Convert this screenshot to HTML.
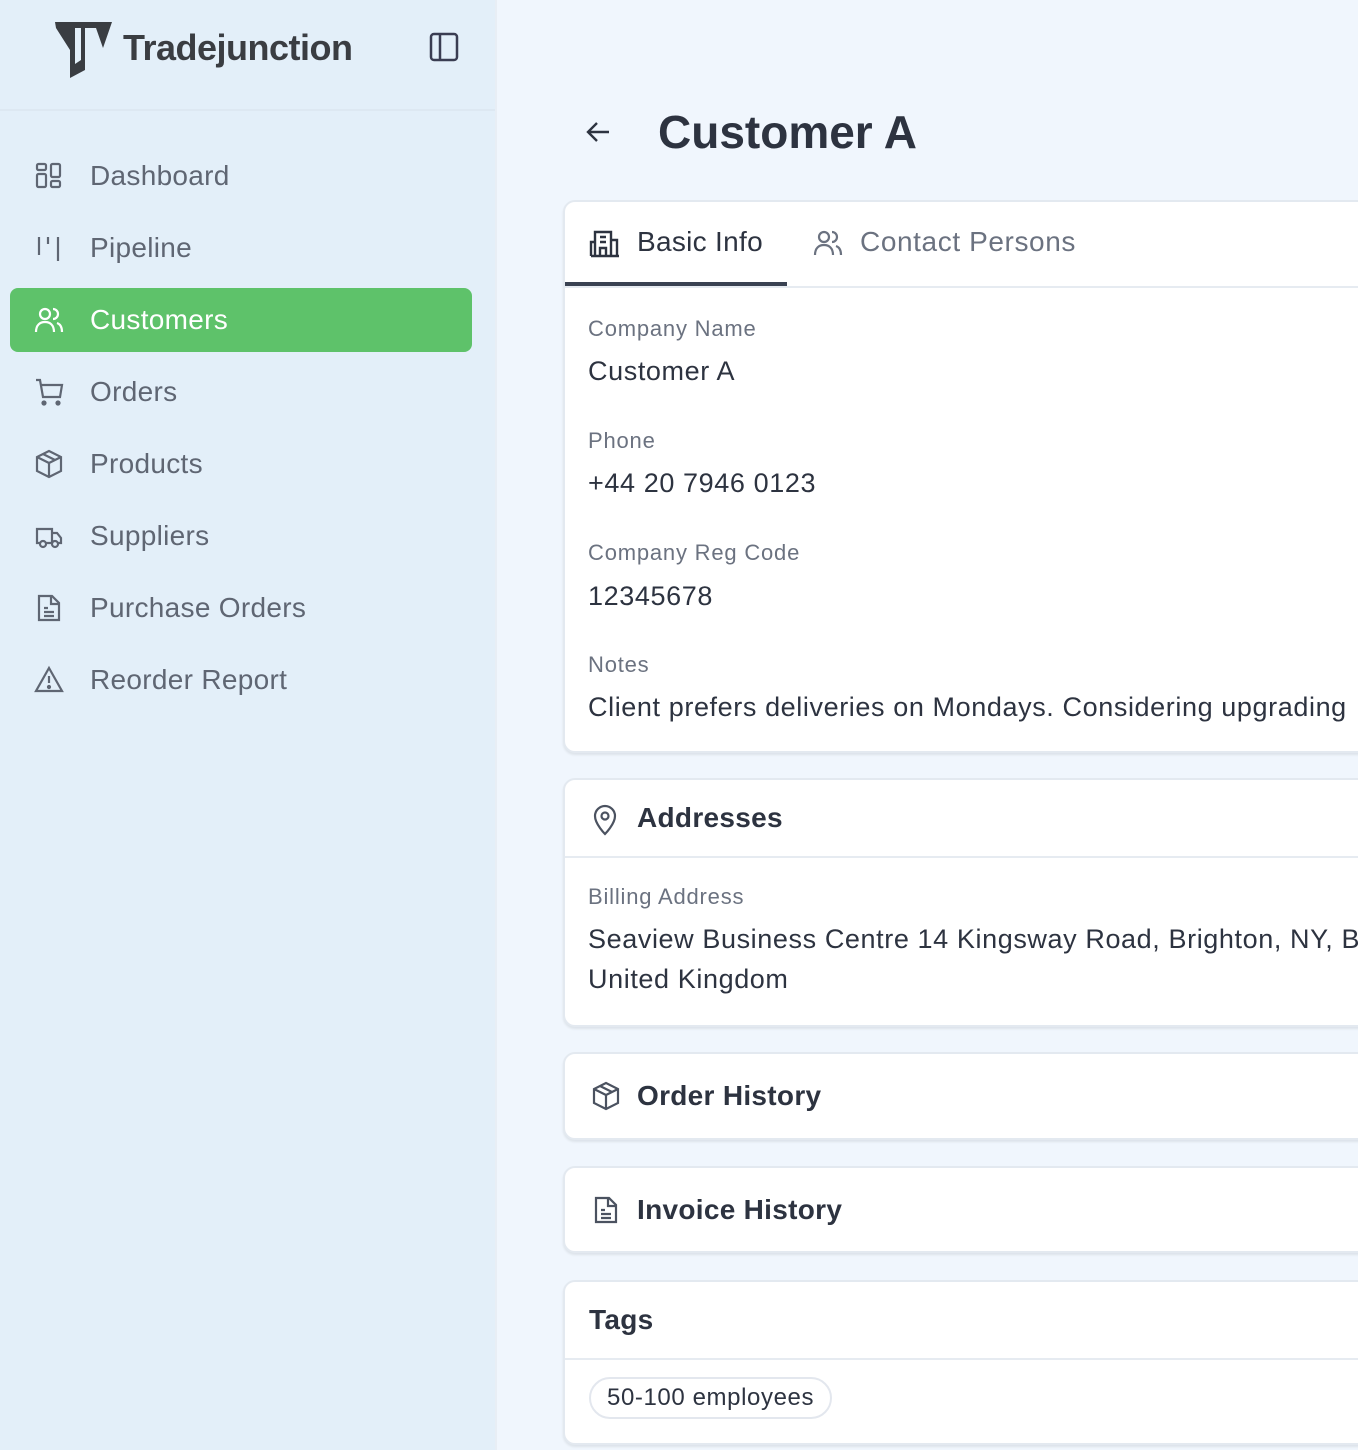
<!DOCTYPE html>
<html><head><style>
*{box-sizing:border-box;margin:0;padding:0}
body{width:1358px;height:1450px;overflow:hidden;font-family:"Liberation Sans",sans-serif;background:#f0f6fd;position:relative;color:#2d3340}
.sb{position:absolute;left:0;top:0;width:497px;height:1450px;background:#e3eff9;border-right:2px solid #e8eef5}
.logo{height:111px;border-bottom:2px solid #dde8f2;position:relative}
.nav{position:absolute;left:10px;width:462px;height:64px;border-radius:8px;display:flex;align-items:center;font-size:28px;color:#5f6673;letter-spacing:0.3px}
.nav svg{position:absolute;left:24px;top:17px}
.nav span{position:absolute;left:80px}
.nav.act{background:#5ec26a;color:#fff}
.card{position:absolute;left:563px;width:820px;background:#fff;border:2px solid #e3e9f0;border-radius:12px;box-shadow:0 2px 2px #dde3ea}
.hd{height:78px;border-bottom:2px solid #e6ebf1;display:flex;align-items:center;font-size:28px;font-weight:bold;color:#2d3340;position:relative;letter-spacing:0.3px}
.lbl{position:absolute;left:23px;font-size:22px;color:#6b7280;letter-spacing:0.8px}
.val{position:absolute;left:23px;font-size:27px;color:#2d3340;white-space:nowrap;letter-spacing:0.6px}
</style></head><body>
<div class="sb">
 <div class="logo">
  <svg style="position:absolute;left:55px;top:20px" width="58" height="58" viewBox="0 0 58 58"><path d="M0 2H57L48 28L41 8H30V50L15 58V30L1 8Z" fill="#3a3d42"/><path d="M20 8H26V40L20 44Z" fill="#e3eff9"/></svg>
  <div style="position:absolute;left:123px;top:27px;font-size:36px;font-weight:bold;color:#3a3d42;letter-spacing:-0.5px">Tradejunction</div>
  <svg style="position:absolute;left:429px;top:32px" width="30" height="30" viewBox="0 0 30 30" fill="none" stroke="#3a3d52" stroke-width="2.5"><rect x="2" y="2" width="26" height="26" rx="3"/><path d="M11 2V28"/></svg>
 </div>
 <div class="nav" style="top:144px"><svg width="30" height="30" viewBox="0 0 30 30" fill="none" stroke="#5f6673" stroke-width="2.2"><rect x="3" y="3" width="9" height="6" rx="1.5"/><rect x="3" y="13" width="9" height="13" rx="1.5"/><rect x="17" y="3" width="9" height="13" rx="1.5"/><rect x="17" y="20" width="9" height="6" rx="1.5"/></svg><span>Dashboard</span></div>
 <div class="nav" style="top:216px"><svg width="30" height="30" viewBox="0 0 30 30" fill="none" stroke="#5f6673" stroke-width="2.2"><path d="M5 4V22M14 4V11M24 4V28"/></svg><span>Pipeline</span></div>
 <div class="nav act" style="top:288px"><svg width="30" height="30" viewBox="0 0 30 30" fill="none" stroke="#fff" stroke-width="2.2"><circle cx="11" cy="9" r="5"/><path d="M2 27C2 20 6 17 11 17S20 20 20 27"/><path d="M19 4A5 5 0 0 1 19 14M23 18C26 19 28 22 28 27"/></svg><span>Customers</span></div>
 <div class="nav" style="top:360px"><svg width="30" height="30" viewBox="0 0 30 30" fill="none" stroke="#5f6673" stroke-width="2.2"><path d="M2 3H6L9 20H26L28 8H7"/><circle cx="10" cy="26" r="1.5" fill="#5f6673"/><circle cx="24" cy="26" r="1.5" fill="#5f6673"/></svg><span>Orders</span></div>
 <div class="nav" style="top:432px"><svg width="30" height="30" viewBox="0 0 30 30" fill="none" stroke="#5f6673" stroke-width="2.2"><path d="M15 2L27 8V22L15 28L3 22V8Z"/><path d="M3 8L15 14L27 8M15 14V28M9 5L21 11"/></svg><span>Products</span></div>
 <div class="nav" style="top:504px"><svg width="30" height="30" viewBox="0 0 30 30" fill="none" stroke="#5f6673" stroke-width="2.2"><path d="M6 22H3V8H18V22H12M18 12H23L27 17V22H24"/><circle cx="9" cy="23" r="3"/><circle cx="21" cy="23" r="3"/></svg><span>Suppliers</span></div>
 <div class="nav" style="top:576px"><svg width="30" height="30" viewBox="0 0 30 30" fill="none" stroke="#5f6673" stroke-width="2.2"><path d="M5 3H18L25 10V27H5Z"/><path d="M17 3V11H25M10 15H14M10 19H20M10 23H20"/></svg><span>Purchase Orders</span></div>
 <div class="nav" style="top:648px"><svg width="30" height="30" viewBox="0 0 30 30" fill="none" stroke="#5f6673" stroke-width="2.2"><path d="M15 3L28 26H2Z"/><path d="M15 11V18"/><circle cx="15" cy="22" r="1" fill="#5f6673"/></svg><span>Reorder Report</span></div>
</div>

<svg style="position:absolute;left:585px;top:119px" width="26" height="26" viewBox="0 0 26 26" fill="none" stroke="#2d3340" stroke-width="2.4"><path d="M24 13H3M12 4L3 13L12 22"/></svg>
<div style="position:absolute;left:658px;top:105px;font-size:46px;font-weight:bold;color:#2d3340">Customer A</div>

<div class="card" style="top:200px;height:553px">
 <div style="height:86px;border-bottom:2px solid #e6ebf1;position:relative">
  <svg style="position:absolute;left:24px;top:26px" width="32" height="30" viewBox="0 0 32 30" fill="none" stroke="#2d3340" stroke-width="2.4"><path d="M6 28V4H22V28M22 12H28V28M2 28V14H6M2 28H30"/><path d="M11 9H17M11 14H17M11 28V20H17V28"/></svg>
  <div style="position:absolute;left:72px;top:24px;font-size:28px;color:#2d3340;letter-spacing:0.3px">Basic Info</div>
  <div style="position:absolute;left:0;top:80px;width:222px;height:4px;background:#3a4252"></div>
  <svg style="position:absolute;left:247px;top:26px" width="32" height="30" viewBox="0 0 30 30" fill="none" stroke="#6b7280" stroke-width="2.2"><circle cx="11" cy="9" r="5"/><path d="M2 27C2 20 6 17 11 17S20 20 20 27"/><path d="M19 4A5 5 0 0 1 19 14M23 18C26 19 28 22 28 27"/></svg>
  <div style="position:absolute;left:295px;top:24px;font-size:28px;color:#6b7280;letter-spacing:0.6px">Contact Persons</div>
 </div>
 <div class="lbl" style="top:114px">Company Name</div><div class="val" style="top:154px">Customer A</div>
 <div class="lbl" style="top:226px">Phone</div><div class="val" style="top:266px">+44 20 7946 0123</div>
 <div class="lbl" style="top:338px">Company Reg Code</div><div class="val" style="top:379px">12345678</div>
 <div class="lbl" style="top:450px">Notes</div><div class="val" style="top:490px">Client prefers deliveries on Mondays. Considering upgrading</div>
</div>

<div class="card" style="top:778px;height:249px">
 <div class="hd"><svg style="position:absolute;left:26px;top:24px" width="28" height="32" viewBox="0 0 28 32" fill="none" stroke="#4b5260" stroke-width="2.2"><path d="M14 30C14 30 24 20 24 12A10 10 0 0 0 4 12C4 20 14 30 14 30Z"/><circle cx="14" cy="12" r="3.5"/></svg><span style="position:absolute;left:72px">Addresses</span></div>
 <div class="lbl" style="top:104px">Billing Address</div>
 <div class="val" style="top:144px">Seaview Business Centre 14 Kingsway Road, Brighton, NY, BN</div>
 <div class="val" style="top:184px">United Kingdom</div>
</div>

<div class="card" style="top:1052px;height:88px">
 <div class="hd" style="border:none;height:84px"><svg style="position:absolute;left:26px;top:27px" width="30" height="30" viewBox="0 0 30 30" fill="none" stroke="#4b5260" stroke-width="2.2"><path d="M15 2L27 8V22L15 28L3 22V8Z"/><path d="M3 8L15 14L27 8M15 14V28M9 5L21 11"/></svg><span style="position:absolute;left:72px">Order History</span></div>
</div>
<div class="card" style="top:1166px;height:87px">
 <div class="hd" style="border:none;height:83px"><svg style="position:absolute;left:26px;top:27px" width="30" height="30" viewBox="0 0 30 30" fill="none" stroke="#4b5260" stroke-width="2.2"><path d="M5 3H18L25 10V27H5Z"/><path d="M17 3V11H25M10 15H14M10 19H20M10 23H20"/></svg><span style="position:absolute;left:72px">Invoice History</span></div>
</div>
<div class="card" style="top:1280px;height:165px">
 <div class="hd"><span style="position:absolute;left:24px">Tags</span></div>
 <div style="position:absolute;left:24px;top:95px;height:42px;padding:0 16px;border:2px solid #e3e7ee;border-radius:21px;font-size:24px;line-height:38px;color:#2d3340;letter-spacing:0.6px">50-100 employees</div>
</div>
</body></html>
